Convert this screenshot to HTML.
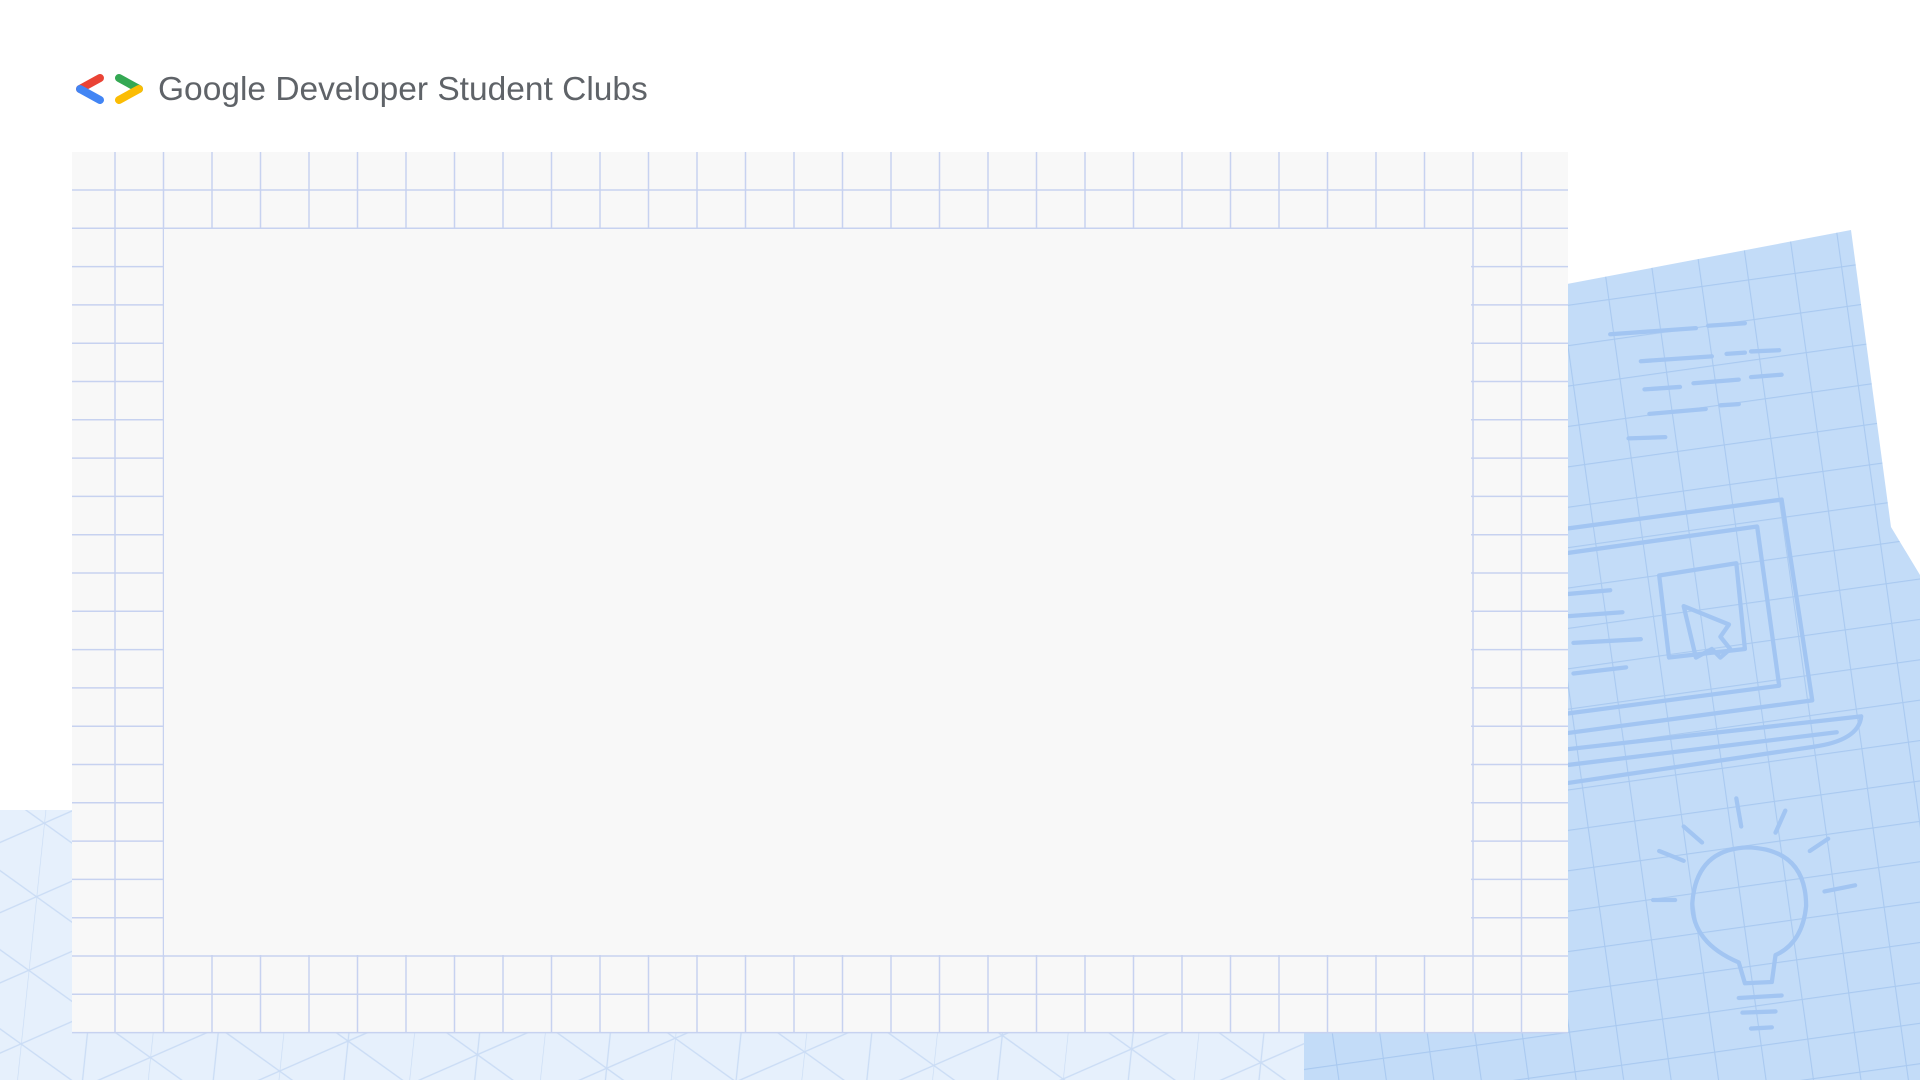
<!DOCTYPE html>
<html><head><meta charset="utf-8"><style>
html,body{margin:0;padding:0;background:#fff;width:1920px;height:1080px;overflow:hidden;font-family:"Liberation Sans",sans-serif}
svg{position:absolute;left:0;top:0}
.t{position:absolute;left:158px;top:71px;font-size:33.5px;color:#5f6368;letter-spacing:0px;white-space:nowrap}
</style></head><body>
<svg width="1920" height="1080" viewBox="0 0 1920 1080">
<defs>
<pattern id="tri" width="130" height="74" patternUnits="userSpaceOnUse" patternTransform="rotate(6)">
<rect width="130" height="74" fill="#e6f0fc"/>
<path d="M0 0L65 37L0 74M65 37L130 0M65 37L130 74M0 0V74M65 0V74" stroke="#cadcf5" stroke-width="1.3" fill="none"/>
</pattern>
<pattern id="bg" width="47" height="40" patternUnits="userSpaceOnUse" patternTransform="rotate(-8)">
<rect width="47" height="40" fill="#c3dcf8"/>
<path d="M0 0.5H47M0.5 0V40" stroke="#a9c9f0" stroke-width="1.2" fill="none"/>
</pattern>
<clipPath id="pc"><polygon points="1567,284 1851,230 1891,527 1920,575 1920,1080 1304,1080 1304,1030 1567,1030"/></clipPath>
</defs>
<rect x="0" y="810" width="80" height="270" fill="url(#tri)"/>
<rect x="0" y="1030" width="1310" height="50" fill="url(#tri)"/>
<polygon points="1567,284 1851,230 1891,527 1920,575 1920,1080 1304,1080 1304,1030 1567,1030" fill="url(#bg)"/>
<g clip-path="url(#pc)"><g transform="scale(1.22449)" stroke="#a2c5f2" stroke-width="3.5" fill="none" stroke-linecap="round" stroke-linejoin="round">
<path d="M1315 273L1385 268M1395 266L1425 264M1340 295L1398 291M1410 289L1425 288M1430 287L1453 286M1343 318L1372 316M1383 313L1420 310M1430 308L1455 306M1347 338L1393 334M1405 331L1420 330M1330 358L1360 357"/>
<path d="M1270 433L1455 408L1480 572L1270 600M1270 453L1435 430L1453 560L1270 584"/>
<path d="M1355 470L1418 460L1425 530L1363 537Z"/>
<path d="M1375 495L1385 537L1398 530L1405 537L1413 530L1405 520L1412 510Z"/>
<path d="M1270 486L1315 482M1270 504L1325 500M1285 525L1340 522M1285 550L1328 545"/>
<path d="M1270 613L1520 585Q1518 605 1480 610L1270 641M1270 626L1500 598"/>
<path d="M1418 652L1422 675M1458 662L1450 680M1375 675L1390 688M1355 695L1375 703M1350 735L1368 735M1478 695L1493 685M1490 728L1515 723"/>
<path d="M1420 786Q1382 770 1382 738Q1385 693 1428 692Q1475 694 1475 740Q1472 770 1450 780L1447 802L1425 803Z"/>
<path d="M1420 815L1455 813M1423 827L1450 826M1430 840L1447 839"/>
</g></g>
<rect x="72" y="152" width="1496" height="881" fill="#f8f8f8"/>
<g stroke="#c7d2f0" stroke-width="1.5" fill="none" id="grid"></g>
<rect x="164" y="229" width="1307" height="726" fill="#f8f8f8"/>
<g transform="translate(76,75)">
<path d="M4 14L24 3" stroke="#ea4335" stroke-width="8" stroke-linecap="round"/>
<path d="M4 14L24 25" stroke="#4285f4" stroke-width="8" stroke-linecap="round"/>
<path d="M43 3L63 14" stroke="#34a853" stroke-width="8" stroke-linecap="round"/>
<path d="M43 25L63 14" stroke="#fbbc04" stroke-width="8" stroke-linecap="round"/>
</g>
</svg>
<div class="t">Google Developer Student Clubs</div>
<script>
var g=document.getElementById('grid'),d='';
for(var x=115;x<1568;x+=48.5)d+='M'+x+' 152V1033';
for(var y=190;y<1033;y+=38.3)d+='M72 '+y+'H1568';
g.innerHTML='<path d="'+d+'"/>';
</script>
</body></html>
